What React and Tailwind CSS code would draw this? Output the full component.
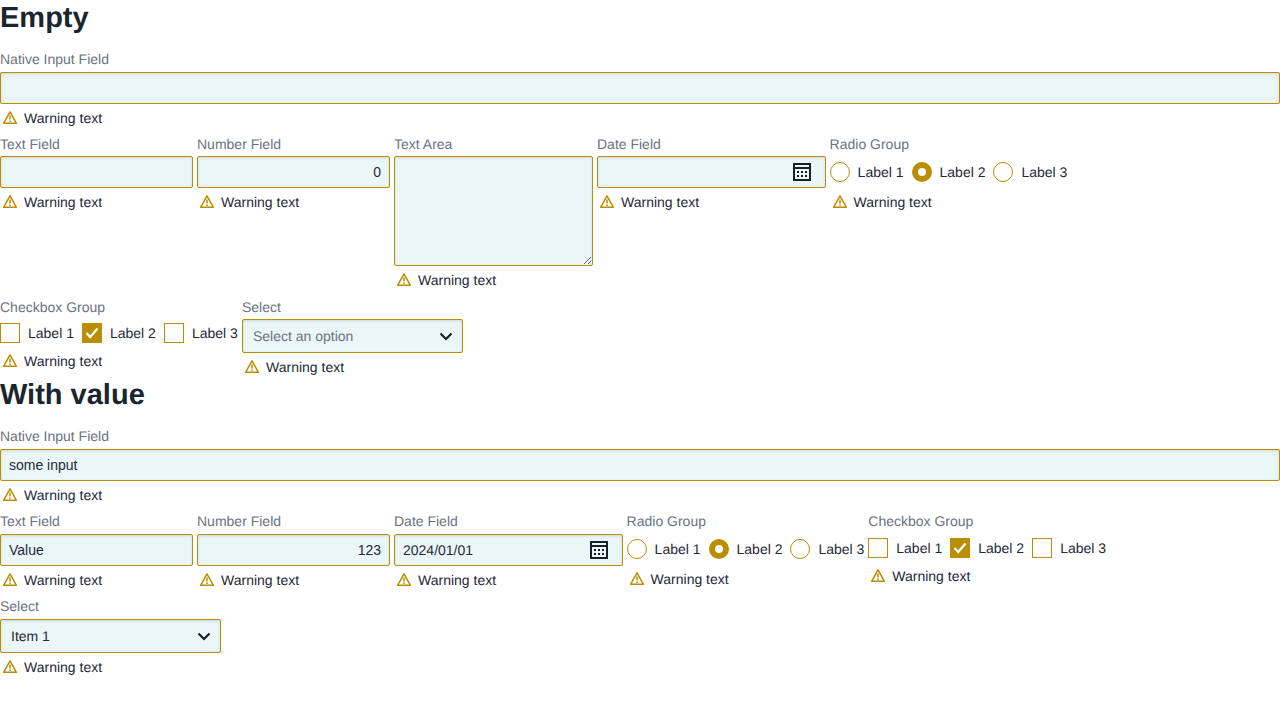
import React from "react";

const box =
  "h-8 w-full rounded-[2px] border border-[#b98e00] bg-[#ebf6f9] px-2 text-sm text-[#1f2937] shadow-[inset_0_1px_3px_rgba(0,0,0,0.12)] outline-none";

function WarnIcon() {
  return (
    <svg width="16" height="16" viewBox="0 0 16 16" fill="none" className="shrink-0">
      <path d="M8 1.8 14.4 13.3H1.6Z" stroke="#b98e00" strokeWidth="1.5" strokeLinejoin="round" />
      <path d="M8 5.5v4" stroke="#b98e00" strokeWidth="1.5" />
      <path d="M8 10.5v1.5" stroke="#b98e00" strokeWidth="1.5" />
    </svg>
  );
}

function CalendarIcon() {
  return (
    <svg width="18" height="18" viewBox="0 0 18 18" fill="none" className="shrink-0">
      <rect x="1" y="1" width="16" height="16" stroke="#17202a" strokeWidth="2" />
      <rect x="1" y="4" width="16" height="2" fill="#17202a" />
      {[4, 8, 12].map((x) =>
        [8, 12].map((y) => <rect key={x + "-" + y} x={x} y={y} width="2" height="2" fill="#17202a" />)
      )}
    </svg>
  );
}

function Chevron() {
  return (
    <svg width="14" height="9" viewBox="0 0 14 9" fill="none" className="shrink-0">
      <path d="M1.5 1.5 7 7l5.5-5.5" stroke="#17202a" strokeWidth="2.2" />
    </svg>
  );
}

function Warning({ className = "" }) {
  return (
    <div className={"flex h-5 items-center gap-1.5 pl-0.5 text-sm text-[#1f2937] " + className}>
      <WarnIcon />
      <span>Warning text</span>
    </div>
  );
}

function Field({ label, width, children, labelClass = "mb-[3px]", warnClass = "mt-1" }) {
  return (
    <div className={"shrink-0 " + width}>
      <div className={"h-5 text-sm leading-5 text-[#6b7280] " + labelClass}>{label}</div>
      {children}
      <Warning className={warnClass} />
    </div>
  );
}

function TextInput({ value = "", right, className = "" }) {
  return (
    <input
      readOnly
      value={value}
      className={box + " block " + (right ? "text-right " : "") + className}
    />
  );
}

function DateInput({ value = "" }) {
  return (
    <div className={box + " flex items-center justify-between pr-[14px]"}>
      <span>{value}</span>
      <CalendarIcon />
    </div>
  );
}

function Radio({ checked, label }) {
  return (
    <div className="flex items-center gap-2 whitespace-nowrap text-sm text-[#1f2937]">
      {checked ? (
        <span className="flex h-5 w-5 items-center justify-center rounded-full bg-[#b98e00]">
          <span className="h-2 w-2 rounded-full bg-white" />
        </span>
      ) : (
        <span className="h-5 w-5 rounded-full border border-[#b98e00] bg-white" />
      )}
      {label}
    </div>
  );
}

function Check({ checked, label }) {
  return (
    <div className="flex items-center gap-2 whitespace-nowrap text-sm text-[#1f2937]">
      {checked ? (
        <span className="flex h-5 w-5 items-center justify-center bg-[#b98e00]">
          <svg width="14" height="12" viewBox="0 0 14 12" fill="none">
            <path d="M1.5 6 5.2 10 12.5 1.5" stroke="#fff" strokeWidth="2.2" />
          </svg>
        </span>
      ) : (
        <span className="h-5 w-5 border border-[#b98e00] bg-white" />
      )}
      {label}
    </div>
  );
}

function RadioGroup() {
  return (
    <Field label="Radio Group" width="w-[237.7px]" labelClass="mb-0.5">
      <div className="flex h-8 items-center gap-2">
        <Radio label="Label 1" />
        <Radio checked label="Label 2" />
        <Radio label="Label 3" />
      </div>
    </Field>
  );
}

function CheckGroup({ rowClass }) {
  return (
    <Field label="Checkbox Group" width="w-[238px]" labelClass="mb-0.5" warnClass="mt-2">
      <div className={"flex h-5 items-center gap-2 " + rowClass}>
        <Check label="Label 1" />
        <Check checked label="Label 2" />
        <Check label="Label 3" />
      </div>
    </Field>
  );
}

function SelectBox({ text, placeholder }) {
  return (
    <div
      className={
        box +
        " flex !h-[34px] items-center justify-between pl-[10px] pr-[9px] " +
        (placeholder ? "!text-[#6b7280]" : "")
      }
    >
      <span>{text}</span>
      <Chevron />
    </div>
  );
}

function Section({ title, children }) {
  return (
    <section>
      <h2 className="h-[34px] text-[29px] font-bold leading-[36px] text-[#1a2530]">{title}</h2>
      <div className="pt-[15px]">{children}</div>
    </section>
  );
}

export default function App() {
  return (
    <div className="min-h-[720px] bg-white font-['Liberation_Sans',Arial,sans-serif] [text-rendering:geometricPrecision]">
      <Section title="Empty">
        <Field label="Native Input Field" width="w-full">
          <TextInput />
        </Field>
        <div className="mt-1.5 flex gap-1">
          <Field label="Text Field" width="w-[193px]" labelClass="mb-0.5">
            <TextInput />
          </Field>
          <Field label="Number Field" width="w-[193px]" labelClass="mb-0.5">
            <TextInput value="0" right />
          </Field>
          <Field label="Text Area" width="w-[199px]" labelClass="mb-0.5">
            <textarea readOnly className={box + " block !h-[110px]"} />
          </Field>
          <Field label="Date Field" width="w-[228.6px]" labelClass="mb-0.5">
            <DateInput />
          </Field>
          <RadioGroup />
        </div>
        <div className="mt-[7px] flex gap-1">
          <CheckGroup rowClass="mt-1.5" />
          <Field label="Select" width="w-[221px]" labelClass="mb-0.5">
            <SelectBox text="Select an option" placeholder />
          </Field>
        </div>
      </Section>
      <Section title="With value">
        <Field label="Native Input Field" width="w-full">
          <TextInput value="some input" />
        </Field>
        <div className="mt-1.5 flex gap-1">
          <Field label="Text Field" width="w-[193px]">
            <TextInput value="Value" />
          </Field>
          <Field label="Number Field" width="w-[193px]">
            <TextInput value="123" right />
          </Field>
          <Field label="Date Field" width="w-[228.6px]">
            <DateInput value="2024/01/01" />
          </Field>
          <RadioGroup />
          <CheckGroup rowClass="mt-[7px]" />
        </div>
        <div className="mt-1.5">
          <Field label="Select" width="w-[221px]">
            <SelectBox text="Item 1" />
          </Field>
        </div>
      </Section>
    </div>
  );
}
